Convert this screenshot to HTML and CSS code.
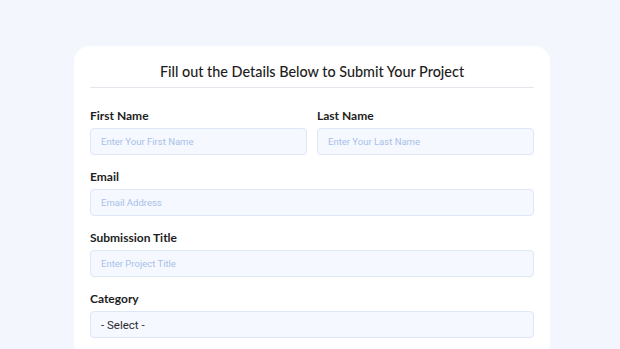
FILE: index.html
```html
<!DOCTYPE html>
<html lang="en">

<head>
  <meta charset="UTF-8">
  <meta name="viewport" content="width=device-width, initial-scale=1.0">
  <title>Submit Your Project</title>
  <link rel="stylesheet" href="styles.css">
</head>

<body>

  <div class="card">
    <h2 class="title">Fill out the Details Below to Submit Your Project</h2>

    <form class="form">
      <div class="row">
        <div class="field">
          <label>First Name</label>
          <input type="text" placeholder="Enter Your First Name">
        </div>
        <div class="field">
          <label>Last Name</label>
          <input type="text" placeholder="Enter Your Last Name">
        </div>
      </div>

      <div class="field">
        <label>Email</label>
        <input type="text" placeholder="Email Address">
      </div>

      <div class="field">
        <label>Submission Title</label>
        <input type="text" placeholder="Enter Project Title">
      </div>

      <div class="field">
        <label>Category</label>
        <div class="select">- Select -</div>
      </div>
    </form>
  </div>

</body>

</html>
```

FILE: styles.css
```css
* {
  margin: 0;
  padding: 0;
  box-sizing: border-box;
}

body {
  background-color: #f3f7fd;
  font-family: "Lato", "Noto Sans", sans-serif;
  color: #1b1b1f;
}

.card {
  margin: 46px 70px 0 74px;
  padding: 0 16px 20px;
  background-color: #fff;
  border-radius: 16px;
}

.title {
  padding: 16px 0 5px;
  border-bottom: 1px solid #e3e6ec;
  font-size: 14.4px;
  line-height: 20px;
  font-weight: 500;
  text-align: center;
  color: #1d1d22;
}

.form {
  display: flex;
  flex-direction: column;
  gap: 14px;
  padding-top: 20px;
}

.row {
  display: flex;
  gap: 10px;
}

.row .field {
  flex: 1;
}

.field {
  display: flex;
  flex-direction: column;
}

.field label {
  font-size: 12px;
  line-height: 16px;
  font-weight: 700;
  color: #1d1d22;
  margin-bottom: 4px;
}

.field input,
.select {
  height: 27px;
  padding: 0 10px;
  background-color: #f5f8fe;
  border: 1px solid #dde7f6;
  border-radius: 4px;
  font-family: "Roboto", "Liberation Sans", sans-serif;
  font-size: 9.5px;
  outline: none;
}

.field input::placeholder {
  color: #a8c0ea;
}

.select {
  display: flex;
  align-items: center;
  font-size: 11.5px;
  color: #2a2a2e;
}
```
